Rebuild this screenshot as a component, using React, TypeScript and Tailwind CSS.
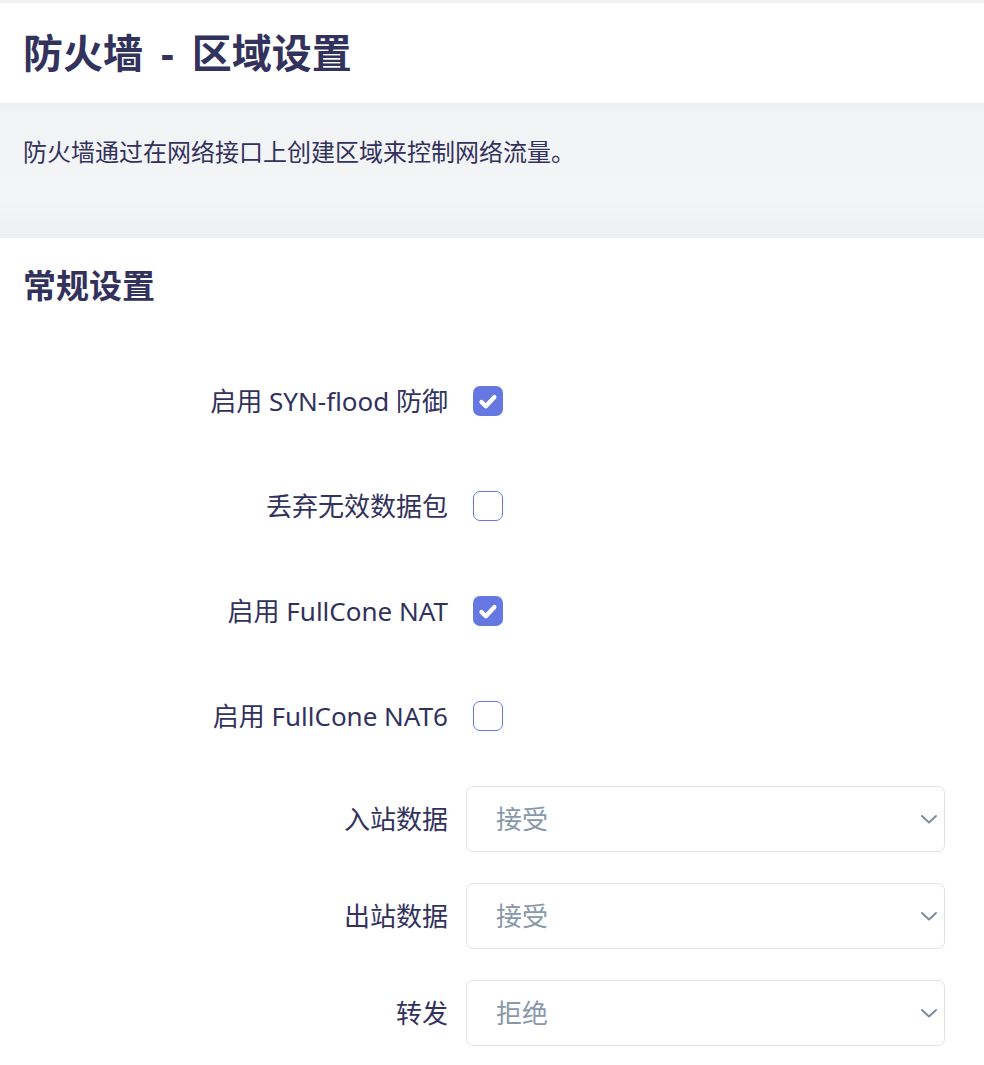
import React from "react";

const FONT = { fontFamily: '"Noto Sans", "Noto Sans CJK SC", sans-serif' };

const CHECKS = [
  { label: "启用 SYN-flood 防御", checked: true },
  { label: "丢弃无效数据包", checked: false },
  { label: "启用 FullCone NAT", checked: true },
  { label: "启用 FullCone NAT6", checked: false },
];

const SELECTS = [
  { label: "入站数据", value: "接受" },
  { label: "出站数据", value: "接受" },
  { label: "转发", value: "拒绝" },
];

function Checkbox({ checked }: { checked: boolean }) {
  if (checked) {
    return (
      <div className="w-[30px] h-[30px] rounded-[7px] bg-[#6577e0] flex items-center justify-center">
        <svg width="30" height="30" viewBox="0 0 30 30">
          <path d="M8.5 16 L12.8 20.2 L21.3 11.2" fill="none" stroke="#fff" strokeWidth="4.4" strokeLinecap="round" strokeLinejoin="round" />
        </svg>
      </div>
    );
  }
  return <div className="w-[30px] h-[30px] rounded-[7px] border border-[#6577e0] bg-white" />;
}

export default function App() {
  return (
    <div className="bg-white min-h-screen text-[#32325d] border-t-[3px] border-[#f1f2f4]" style={FONT}>
      {/* Title */}
      <header className="h-[100px] flex items-center px-[23px]">
        <h1 className="text-[40px] font-bold leading-none">
          防火墙<span className="mx-[18px]">-</span>区域设置
        </h1>
      </header>

      {/* Description band */}
      <div className="h-[135px] px-[23px] pt-[33px] bg-[linear-gradient(to_bottom,#eceef1_0px,#f2f3f5_10px,#f4f5f7_95px,#eeeff2_135px)]">
        <p className="text-[24px] leading-[32px]">防火墙通过在网络接口上创建区域来控制网络流量。</p>
      </div>

      {/* General settings */}
      <section>
        <h2 className="px-[23px] pt-[28px] text-[33px] leading-[40px] font-bold">常规设置</h2>

        <div className="mt-[42px]">
          {CHECKS.map((c) => (
            <div key={c.label} className="h-[105px] flex items-center">
              <div className="w-[448px] text-right text-[26px] leading-none">{c.label}</div>
              <div className="ml-[25px]">
                <Checkbox checked={c.checked} />
              </div>
            </div>
          ))}
        </div>

        <div className="mt-[18px] flex flex-col gap-[31px]">
          {SELECTS.map((s) => (
            <div key={s.label} className="flex items-center">
              <div className="w-[448px] text-right text-[26px] leading-none">{s.label}</div>
              <div className="ml-[18px] w-[479px] h-[66px] border border-[#dfe2e7] rounded-[7px] flex items-center justify-between pl-[29px] pr-[6px]">
                <span className="text-[26px] text-[#8898aa] leading-none">{s.value}</span>
                <svg width="18" height="12" viewBox="0 0 18 12">
                  <path d="M2 3 L9 9.5 L16 3" fill="none" stroke="#7d8ca1" strokeWidth="2" strokeLinecap="round" strokeLinejoin="round" />
                </svg>
              </div>
            </div>
          ))}
        </div>
      </section>
    </div>
  );
}
